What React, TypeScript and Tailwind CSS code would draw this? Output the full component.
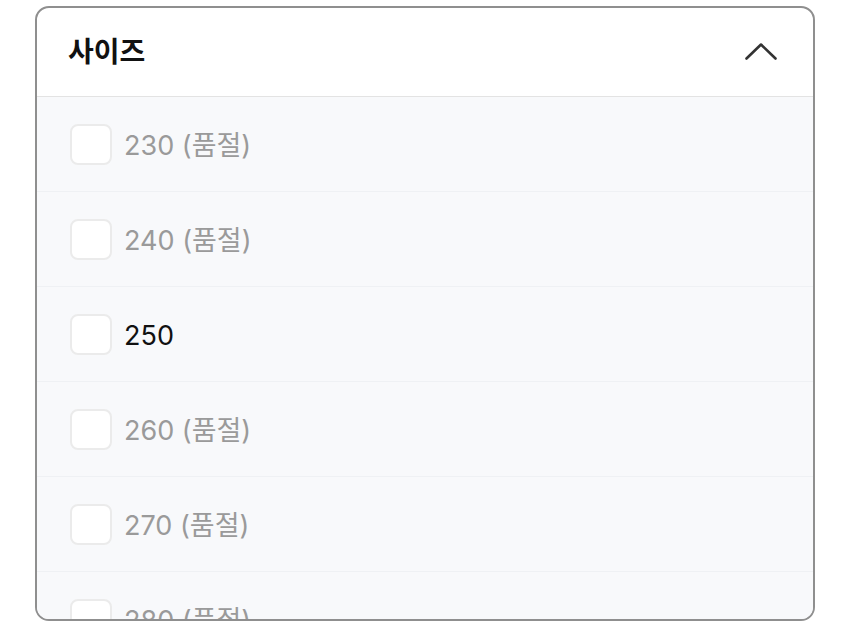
import { useState } from 'react'

const sizes = [
  { label: '230', soldOut: true },
  { label: '240', soldOut: true },
  { label: '250', soldOut: false },
  { label: '260', soldOut: true },
  { label: '270', soldOut: true },
  { label: '280', soldOut: true },
  { label: '290', soldOut: true },
]

export default function App() {
  const [checked, setChecked] = useState<string[]>([])

  function toggle(label: string) {
    setChecked((c) => (c.includes(label) ? c.filter((x) => x !== label) : [...c, label]))
  }

  return (
    <div
      className="w-[850px] h-[630px] overflow-hidden bg-white pt-[6px] pl-[35px]"
      style={{ fontFamily: 'Inter, "Noto Sans CJK KR", sans-serif' }}
    >
      <div className="w-[780px] h-[615px] border-2 border-[#8f8f8f] rounded-[14px] overflow-hidden flex flex-col bg-white">
        <div className="h-[89px] shrink-0 flex items-center justify-between pl-[31px] pr-[36px] pb-[1px] border-b border-[#e3e3e3]">
          <span className="text-[28px] font-bold text-[#111]">사이즈</span>
          <svg width="32" height="18" viewBox="0 0 32 18" fill="none" className="mb-[2px]">
            <polyline
              points="1.5,16.5 16,2.5 30.5,16.5"
              stroke="#333"
              strokeWidth="2.6"
              strokeLinecap="round"
              strokeLinejoin="round"
            />
          </svg>
        </div>
        <div className="flex-1 overflow-hidden bg-[#f8f9fb]">
          {sizes.map((s) => (
            <label
              key={s.label}
              className="h-[95px] flex items-center gap-3 pl-[33px] border-b border-[#eff1f4] cursor-pointer"
            >
              <input
                type="checkbox"
                className="sr-only"
                checked={checked.includes(s.label)}
                onChange={() => toggle(s.label)}
              />
              <span className="w-[42px] h-[41px] rounded-lg border-2 border-[#ebebeb] bg-white shrink-0" />
              <span className={`text-[27px] pt-[4px] ${s.soldOut ? 'text-[#9a9a9a]' : 'text-[#111]'}`}>
                {s.label}
                {s.soldOut ? ' (품절)' : ''}
              </span>
            </label>
          ))}
        </div>
      </div>
    </div>
  )
}
